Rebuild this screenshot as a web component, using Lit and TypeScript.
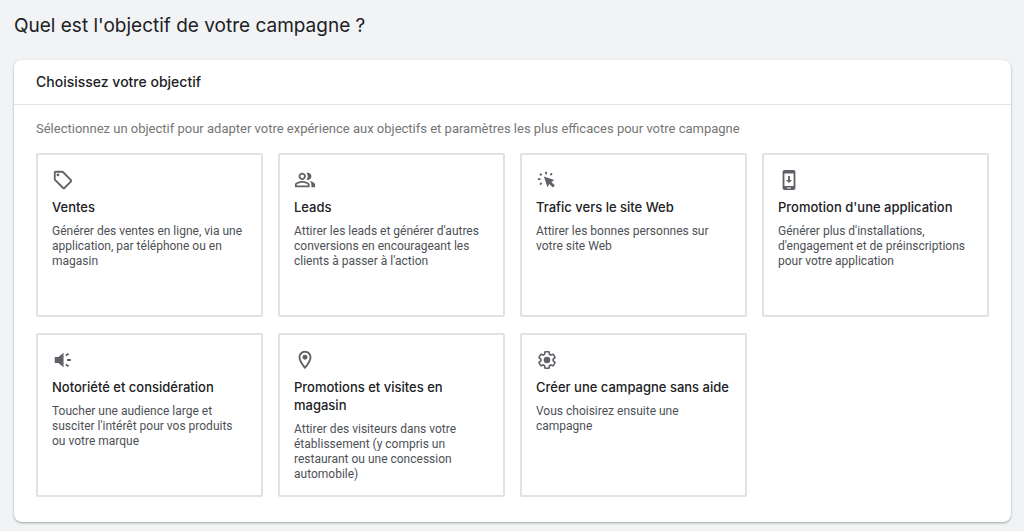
import { LitElement, html, css, svg, type SVGTemplateResult } from "lit";
import { customElement, property } from "lit/decorators.js";

const icons: Record<string, SVGTemplateResult> = {
  tag: svg`<path d="M21.41 11.41l-8.83-8.83C12.21 2.21 11.7 2 11.17 2H4c-1.1 0-2 .9-2 2v7.17c0 .53.21 1.04.59 1.41l8.83 8.83c.78.78 2.05.78 2.83 0l7.17-7.17c.78-.78.78-2.04-.01-2.83zM12.83 20L4 11.17V4h7.17L20 12.83 12.83 20z"/><circle cx="6.5" cy="6.5" r="1.5"/>`,
  people: svg`<path d="M16.67 13.13C18.04 14.06 19 15.32 19 17v3h4v-3c0-2.18-3.57-3.47-6.33-3.87zM15 12c2.21 0 4-1.79 4-4s-1.79-4-4-4c-.47 0-.91.1-1.33.24C14.5 5.27 15 6.58 15 8s-.5 2.73-1.33 3.76c.42.14.86.24 1.33.24zM9 12c2.21 0 4-1.79 4-4s-1.79-4-4-4-4 1.79-4 4 1.79 4 4 4zm0-6c1.1 0 2 .9 2 2s-.9 2-2 2-2-.9-2-2 .9-2 2-2zM9 13c-2.67 0-8 1.34-8 4v3h16v-3c0-2.66-5.33-4-8-4zm6 5H3v-.99C3.2 16.29 6.3 15 9 15s5.8 1.29 6 2v1z"/>`,
  click: svg`<path d="M8.6 8.2l11.4 3.9-3.2 2.1 3.8 3.7-2.2 2.2-3.8-3.8-2.1 3.5z"/><path class="line" d="M11 3v2.8M17.4 4.8l-1.7 1.9M4.4 5.2l1.7 1.7M2 11h3M4.4 17l1.8-1.8"/>`,
  phone: svg`<path fill-rule="evenodd" d="M7 1h10a2 2 0 0 1 2 2v18a2 2 0 0 1-2 2H7a2 2 0 0 1-2-2V3a2 2 0 0 1 2-2zm0 4v13.5h10V5zM10 20.2v1.2h4v-1.2z"/><path d="M11 7.5h2V12h2.4L12 15.4 8.6 12H11z"/>`,
  speaker: svg`<path d="M3 8.6h4L12.6 4v16L7 15.4H3z"/><path class="line" d="M15 7.1l3.2-2M16.4 12h4.2M15 16.9l3.2 2"/>`,
  pin: svg`<path d="M12 2C8.13 2 5 5.13 5 9c0 5.25 7 13 7 13s7-7.75 7-13c0-3.87-3.13-7-7-7zM7 9c0-2.76 2.24-5 5-5s5 2.24 5 5c0 2.88-2.88 7.19-5 9.88C9.92 16.21 7 11.85 7 9z"/><circle cx="12" cy="9" r="2.7"/>`,
  gear: svg`<g transform="translate(1.2 1.2) scale(.9)"><path class="line" d="M19.43 12.98c.04-.32.07-.64.07-.98 0-.34-.03-.66-.07-.98l2.11-1.65c.19-.15.24-.42.12-.64l-2-3.46c-.09-.16-.26-.25-.44-.25-.06 0-.12.01-.17.03l-2.49 1c-.52-.4-1.08-.73-1.69-.98l-.38-2.65C14.46 2.18 14.25 2 14 2h-4c-.25 0-.46.18-.49.42l-.38 2.65c-.61.25-1.17.59-1.69.98l-2.49-1c-.06-.02-.12-.03-.18-.03-.17 0-.34.09-.43.25l-2 3.46c-.13.22-.07.49.12.64l2.11 1.65c-.04.32-.07.65-.07.98 0 .33.03.66.07.98l-2.11 1.65c-.19.15-.24.42-.12.64l2 3.46c.09.16.26.25.44.25.06 0 .12-.01.17-.03l2.49-1c.52.4 1.08.73 1.69.98l.38 2.65c.03.24.24.42.49.42h4c.25 0 .46-.18.49-.42l.38-2.65c.61-.25 1.17-.59 1.69-.98l2.49 1c.06.02.12.03.18.03.17 0 .34-.09.43-.25l2-3.46c.12-.22.07-.49-.12-.64z"/><circle cx="12" cy="12" r="4"/></g>`,
};

interface Goal {
  icon: string;
  name: string;
  text: string;
}

const goals: Goal[] = [
  { icon: "tag", name: "Ventes", text: "Générer des ventes en ligne, via une application, par téléphone ou en magasin" },
  { icon: "people", name: "Leads", text: "Attirer les leads et générer d'autres conversions en encourageant les clients à passer à l'action" },
  { icon: "click", name: "Trafic vers le site Web", text: "Attirer les bonnes personnes sur votre site Web" },
  { icon: "phone", name: "Promotion d'une application", text: "Générer plus d'installations, d'engagement et de préinscriptions pour votre application" },
  { icon: "speaker", name: "Notoriété et considération", text: "Toucher une audience large et susciter l'intérêt pour vos produits ou votre marque" },
  { icon: "pin", name: "Promotions et visites en magasin", text: "Attirer des visiteurs dans votre établissement (y compris un restaurant ou une concession automobile)" },
  { icon: "gear", name: "Créer une campagne sans aide", text: "Vous choisirez ensuite une campagne" },
];

@customElement("goal-card")
export class GoalCard extends LitElement {
  @property({ attribute: false }) goal!: Goal;

  static styles = css`
    :host {
      display: grid;
    }
    .card {
      display: flex;
      flex-direction: column;
      align-items: flex-start;
      box-sizing: border-box;
      width: 100%;
      min-height: 164px;
      margin: 0;
      padding: 14px 14px 12px;
      border: 2px solid #e0e2e4;
      border-radius: 2px;
      background: #fff;
      text-align: left;
      cursor: pointer;
    }
    .card:hover {
      background: #f8f9fa;
    }
    .icon {
      width: 22px;
      height: 22px;
      fill: #5f6368;
    }
    .line {
      fill: none;
      stroke: #5f6368;
      stroke-width: 2;
    }
    .name {
      margin-top: 7px;
      font: 500 13px/18px "Google Sans", Inter, sans-serif;
      color: #202124;
    }
    .text {
      margin-top: 8px;
      font: 400 12px/15px Roboto, sans-serif;
      color: #4d5156;
    }
  `;

  render() {
    return html`<button class="card" type="button">
      <svg class="icon" viewBox="0 0 24 24" aria-hidden="true">${icons[this.goal.icon]}</svg>
      <span class="name">${this.goal.name}</span>
      <span class="text">${this.goal.text}</span>
    </button>`;
  }
}

@customElement("app-root")
export class AppRoot extends LitElement {
  static styles = css`
    :host {
      display: block;
      box-sizing: border-box;
      min-height: 100vh;
      padding: 12px 13px 8px 14px;
      background: #f1f3f4;
    }
    .title {
      margin: 0 0 20px;
      font: 400 19px/28px "Google Sans", Inter, sans-serif;
      color: #202124;
    }
    .panel {
      border-radius: 8px;
      background: #fff;
      box-shadow: 0 1px 2px rgba(60, 64, 67, 0.3), 0 1px 3px rgba(60, 64, 67, 0.15);
    }
    .heading {
      margin: 0;
      padding: 12px 22px;
      border-bottom: 1px solid #e0e2e4;
      font: 500 14px/20px "Google Sans", Inter, sans-serif;
      color: #202124;
    }
    .body {
      padding: 14px 22px 25px;
    }
    .intro {
      margin: 0 0 14px;
      font: 400 13px/20px Roboto, sans-serif;
      color: #757575;
    }
    .grid {
      display: grid;
      grid-template-columns: repeat(auto-fill, minmax(210px, 1fr));
      gap: 16px 15px;
    }
  `;

  render() {
    return html`
      <h1 class="title">Quel est l'objectif de votre campagne ?</h1>
      <section class="panel" aria-labelledby="heading">
        <h2 class="heading" id="heading">Choisissez votre objectif</h2>
        <div class="body">
          <p class="intro">
            Sélectionnez un objectif pour adapter votre expérience aux objectifs et paramètres les plus efficaces pour votre campagne
          </p>
          <div class="grid">${goals.map((goal) => html`<goal-card .goal=${goal}></goal-card>`)}</div>
        </div>
      </section>
    `;
  }
}
